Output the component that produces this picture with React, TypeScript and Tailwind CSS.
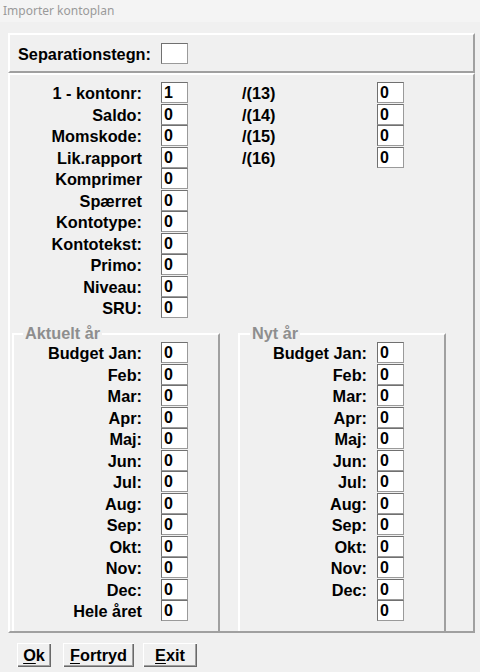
import React from "react";

const topLeft = [
  "1 - kontonr:",
  "Saldo:",
  "Momskode:",
  "Lik.rapport",
  "Komprimer",
  "Spærret",
  "Kontotype:",
  "Kontotekst:",
  "Primo:",
  "Niveau:",
  "SRU:",
];
const topRight = ["/(13)", "/(14)", "/(15)", "/(16)"];
const months = [
  "Budget Jan:",
  "Feb:",
  "Mar:",
  "Apr:",
  "Maj:",
  "Jun:",
  "Jul:",
  "Aug:",
  "Sep:",
  "Okt:",
  "Nov:",
  "Dec:",
];

function Box({ value }: { value: string }) {
  return (
    <div className="w-[27px] h-[21px] shrink-0 bg-white border border-[#9a9a9a] border-t-[#707070] border-l-[#707070] pl-[2px] text-[16px] font-bold leading-[19px] text-black">
      {value}
    </div>
  );
}

function Group({
  title,
  labels,
  labelW,
  gap,
  titleLeft,
}: {
  title: string;
  labels: string[];
  labelW: string;
  gap: string;
  titleLeft: string;
}) {
  return (
    <div className="relative w-[208px] border-t-2 border-l-2 border-r-2 border-t-white border-l-white border-r-[#a0a0a0] pt-[7px]">
      <div
        className={`absolute top-[-11px] ${titleLeft} bg-[#f0f0f0] px-[2px] text-[16.3px] leading-[18px] font-bold text-[#8e8e8e]`}
      >
        {title}
      </div>
      {labels.map((l, i) => (
        <div key={i} className="flex items-center h-[21.5px]">
          <div className={`${labelW} text-right text-[16.3px] font-bold leading-[18px] pt-[1px]`}>{l}</div>
          <div className={gap}>
            <Box value="0" />
          </div>
        </div>
      ))}
    </div>
  );
}

function Btn({ first, rest, w }: { first: string; rest: string; w: string }) {
  return (
    <button
      className={`${w} h-[24px] bg-[#f0f0f0] text-[16.3px] font-bold leading-[20px] text-black shadow-[inset_1px_1px_#ffffff,inset_-1px_-1px_#696969,inset_-2px_-2px_#a0a0a0]`}
    >
      <span className="underline underline-offset-2">{first}</span>
      {rest}
    </button>
  );
}

export default function App() {
  return (
    <div className="w-[480px] h-[672px] bg-[#f0f0f0] text-black font-['Liberation_Sans',Arial,sans-serif] overflow-hidden">
      <div className="h-[22px] bg-[#f4f4f4] pl-[3px] flex items-center text-[12px] text-[#9a9a9a] font-['Noto_Sans',sans-serif]">
        Importer kontoplan
      </div>

      <div className="pl-[8px] pt-[11px]">
        <div className="w-[467px] h-[40px] border-2 border-t-white border-l-white border-r-[#a0a0a0] border-b-[#a0a0a0] flex items-center pl-[8px]">
          <div className="w-[143px] text-[16.3px] font-bold leading-[18px] pt-[1px]">Separationstegn:</div>
          <Box value="" />
        </div>

        <div className="w-[467px] h-[560px] flex flex-col border-2 border-t-white border-l-white border-r-[#a0a0a0] border-b-[#a0a0a0] pt-[7px]">
          {topLeft.map((l, i) => (
            <div key={i} className="flex items-center h-[21.5px]">
              <div className="w-[132px] text-right text-[16.3px] font-bold leading-[18px] pt-[1px]">{l}</div>
              <div className="ml-[19px]">
                <Box value={i === 0 ? "1" : "0"} />
              </div>
              {topRight[i] && (
                <>
                  <div className="ml-[54px] w-[135px] text-[16.3px] font-bold leading-[18px] pt-[1px]">
                    {topRight[i]}
                  </div>
                  <Box value="0" />
                </>
              )}
            </div>
          ))}

          <div className="flex flex-1 mt-[14.5px] pl-[2px] gap-[18px]">
            <Group
              title="Aktuelt år"
              labels={[...months, "Hele året"]}
              labelW="w-[128px]"
              gap="ml-[19px]"
              titleLeft="left-[9px]"
            />
            <Group
              title="Nyt år"
              labels={[...months, ""]}
              labelW="w-[127px]"
              gap="ml-[10px]"
              titleLeft="left-[10px]"
            />
          </div>
        </div>

        <div className="flex mt-[10px] pl-[9px]">
          <Btn first="O" rest="k" w="w-[34px]" />
          <div className="ml-[12px]">
            <Btn first="F" rest="ortryd" w="w-[71px]" />
          </div>
          <div className="ml-[9px]">
            <Btn first="E" rest="xit" w="w-[54px]" />
          </div>
        </div>
      </div>
    </div>
  );
}
